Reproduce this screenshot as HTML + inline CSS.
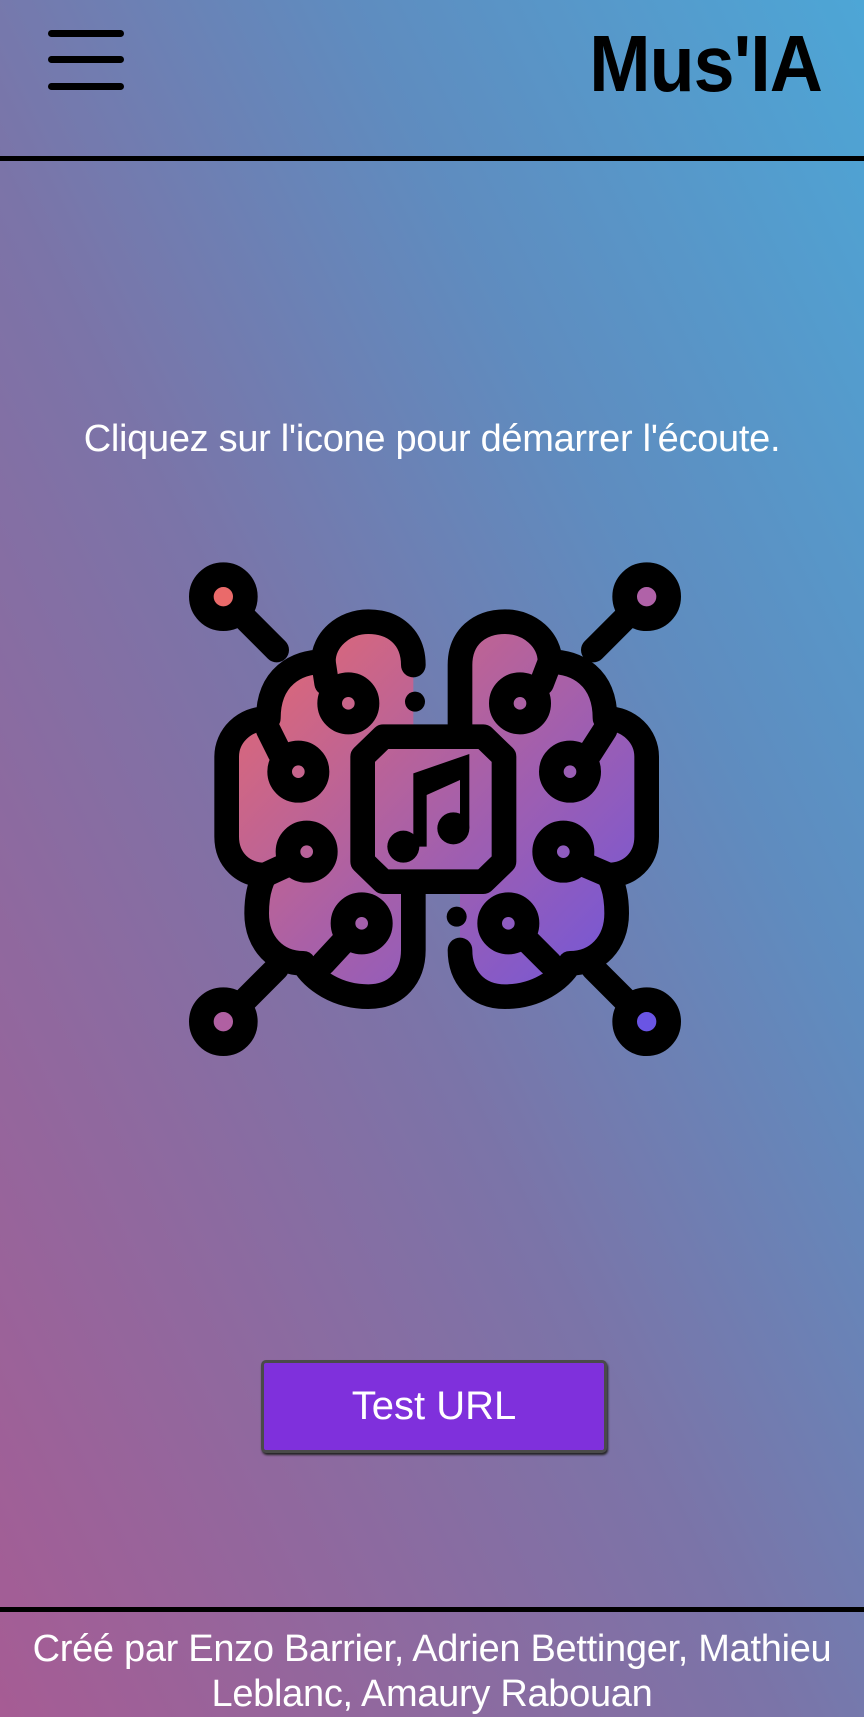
<!DOCTYPE html>
<html><head><meta charset="utf-8"><style>
html,body{margin:0;padding:0}
body{width:864px;height:1717px;position:relative;overflow:hidden;font-family:"Liberation Sans",sans-serif;
background:linear-gradient(to top right,#a65c94 0%,#7b74a8 45%,#5f8cbf 70%,#4da6d6 100%);}
.bar{position:absolute;left:48px;width:76px;height:7px;border-radius:4px;background:#000}
.title{position:absolute;right:42px;top:18px;font-size:80px;font-weight:bold;color:#000;letter-spacing:-1px;transform:scaleX(0.92);transform-origin:right center}
.hr{position:absolute;left:0;width:864px;height:5px;background:#000}
.msg{position:absolute;top:418px;left:0;width:864px;text-align:center;color:#fff;font-size:38px;letter-spacing:-0.3px}
.btn{position:absolute;left:261px;top:1360px;width:340px;height:87px;background:#7f30dc;border:3px solid #4a4a4a;border-radius:5px;box-shadow:1px 2px 2px #222;color:#fff;font-size:40px;text-align:center;line-height:87px}
.foot{position:absolute;top:1627px;left:0;width:864px;text-align:center;color:#fff;font-size:38px;line-height:45px;letter-spacing:-0.3px}
</style></head><body>
<div class="bar" style="top:30px"></div>
<div class="bar" style="top:56px"></div>
<div class="bar" style="top:83px"></div>
<div class="title">Mus'IA</div>
<div class="hr" style="top:156px"></div>
<div class="msg">Cliquez sur l'icone pour démarrer l'écoute.</div>
<svg style="position:absolute;left:180px;top:550px;overflow:visible" width="500" height="520" viewBox="0 0 1500 1560">
<defs><linearGradient id="g" gradientUnits="userSpaceOnUse" x1="150" y1="200" x2="1400" y2="1400">
<stop offset="0" stop-color="#ea6a6c"/><stop offset="0.5" stop-color="#a860a8"/><stop offset="1" stop-color="#6a55e0"/></linearGradient></defs>
<g stroke="#000" stroke-width="74" stroke-linecap="round" stroke-linejoin="round" fill="none">
<line x1="130" y1="140" x2="290" y2="300"/><line x1="1400" y1="140" x2="1240" y2="300"/>
<line x1="130" y1="1415" x2="290" y2="1255"/><line x1="1400" y1="1415" x2="1240" y2="1255"/>
<circle cx="130" cy="140" r="66" fill="#ea6a6a"/><circle cx="1400" cy="140" r="66" fill="#b062a8"/>
<circle cx="130" cy="1415" r="66" fill="#b060a2"/><circle cx="1400" cy="1415" r="66" fill="#6a55e4"/>
<path d="M700,345 C700,260 640,215 565,215 C490,215 430,270 430,335 C350,335 265,380 265,505 C190,505 140,560 140,620 L140,860 C140,930 190,975 255,975 C235,1010 230,1050 230,1090 C230,1180 290,1240 370,1240 C400,1290 470,1340 565,1340 C650,1340 700,1280 700,1200 L700,1020 L700,345 Z" fill="url(#g)" stroke="none"/>
<path d="M700,345 C700,260 640,215 565,215 C490,215 430,270 430,335 C350,335 265,380 265,505 C190,505 140,560 140,620 L140,860 C140,930 190,975 255,975 C235,1010 230,1050 230,1090 C230,1180 290,1240 370,1240 C400,1290 470,1340 565,1340 C650,1340 700,1280 700,1200 L700,1020"/>
<path d="M840,1200 C840,1280 890,1340 975,1340 C1070,1340 1140,1290 1170,1240 C1250,1240 1310,1180 1310,1090 C1310,1050 1305,1010 1285,975 C1350,975 1400,930 1400,860 L1400,620 C1400,560 1350,505 1275,505 C1275,380 1190,335 1110,335 C1110,270 1050,215 975,215 C900,215 840,260 840,345 L840,1200 Z" fill="url(#g)" stroke="none"/>
<path d="M840,1200 C840,1280 890,1340 975,1340 C1070,1340 1140,1290 1170,1240 C1250,1240 1310,1180 1310,1090 C1310,1050 1305,1010 1285,975 C1350,975 1400,930 1400,860 L1400,620 C1400,560 1350,505 1275,505 C1275,380 1190,335 1110,335 C1110,270 1050,215 975,215 C900,215 840,260 840,345 L840,540"/>
<path d="M440,400 L430,335 M300,610 L265,540 M320,945 L255,975 M495,1170 L430,1240"/>
<path d="M1085,400 L1110,335 M1230,610 L1275,540 M1215,945 L1285,975 M1040,1170 L1110,1240"/>
<circle cx="505" cy="460" r="56" fill="url(#g)"/><circle cx="355" cy="665" r="56" fill="url(#g)"/>
<circle cx="380" cy="905" r="56" fill="url(#g)"/><circle cx="545" cy="1120" r="56" fill="url(#g)"/>
<circle cx="1020" cy="460" r="56" fill="url(#g)"/><circle cx="1170" cy="665" r="56" fill="url(#g)"/>
<circle cx="1150" cy="905" r="56" fill="url(#g)"/><circle cx="985" cy="1120" r="56" fill="url(#g)"/>
<polygon points="610,560 910,560 972,620 972,935 910,995 610,995 548,935 548,620" fill="url(#g)"/>
</g>
<circle cx="705" cy="455" r="30" fill="#000"/><circle cx="830" cy="1100" r="30" fill="#000"/>
<g fill="#000">
<polygon points="700,670 868,612 868,835 840,835 840,690 740,735 740,890 700,890"/>
<circle cx="670" cy="890" r="48"/><circle cx="820" cy="835" r="48"/>
</g>
</svg>
<div class="btn">Test URL</div>
<div class="hr" style="top:1607px"></div>
<div class="foot">Créé par Enzo Barrier, Adrien Bettinger, Mathieu<br>Leblanc, Amaury Rabouan</div>
</body></html>
